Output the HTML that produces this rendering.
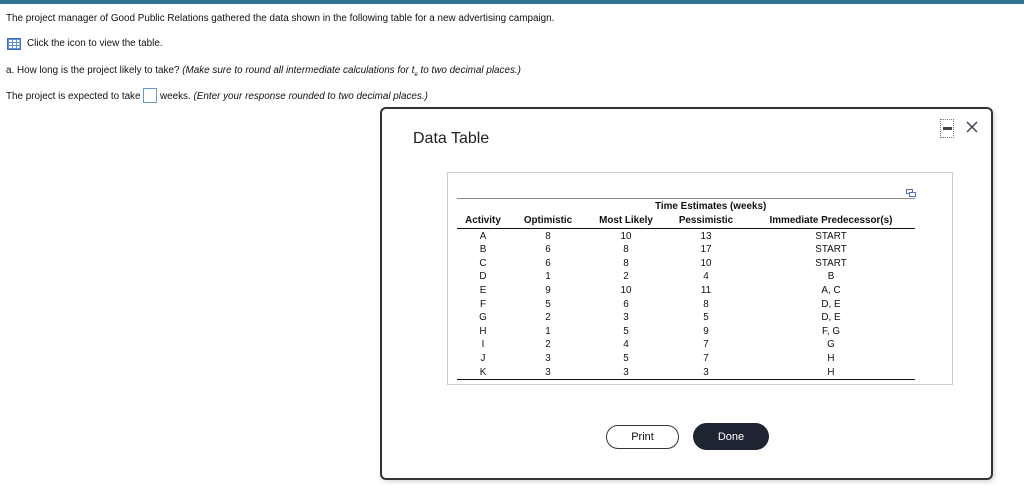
<!DOCTYPE html>
<html><head><style>
body{margin:0;width:1024px;height:495px;background:#fff;font-family:"Liberation Sans",Arial,sans-serif;position:relative;overflow:hidden;color:#111}
.a{position:absolute;white-space:nowrap}
.t{font-size:9.9px}
td,th{padding:0;height:13.6px;text-align:center;font-size:9.9px;line-height:13.6px}
th{font-weight:bold}
</style></head><body>
<div class="a" style="left:0;top:0;width:1024px;height:4px;background:#2f7394"></div>
<div class="a t" style="left:6px;top:13px">The project manager of Good Public Relations gathered the data shown in the following table for a new advertising campaign.</div>
<svg class="a" style="left:7px;top:38px" width="14" height="12"><rect x="0.5" y="0.5" width="13" height="11" fill="#5b8fd8" stroke="#3a6fc0"/><g fill="#fff"><rect x="2" y="2" width="3" height="2"/><rect x="6" y="2" width="3" height="2"/><rect x="10" y="2" width="2.5" height="2"/><rect x="2" y="5" width="3" height="2"/><rect x="6" y="5" width="3" height="2"/><rect x="10" y="5" width="2.5" height="2"/><rect x="2" y="8" width="3" height="2"/><rect x="6" y="8" width="3" height="2"/><rect x="10" y="8" width="2.5" height="2"/></g></svg>
<div class="a t" style="left:27px;top:38px">Click the icon to view the table.</div>
<div class="a t" style="left:6px;top:65px">a. How long is the project likely to take? <i>(Make sure to round all intermediate calculations for t<sub style="font-size:6px">e</sub> to two decimal places.)</i></div>
<div class="a t" style="left:6px;top:91px">The project is expected to take</div>
<div class="a" style="left:143px;top:88px;width:14px;height:15px;border:1px solid #6a9ac8;box-sizing:border-box"></div>
<div class="a t" style="left:160px;top:91px">weeks. <i>(Enter your response rounded to two decimal places.)</i></div>

<div class="a" style="left:380px;top:107px;width:613px;height:373px;border:2px solid #333;border-radius:6px;box-sizing:border-box;box-shadow:2px 2px 4px rgba(0,0,0,.15)"></div>
<div class="a" style="left:413px;top:130px;font-size:16px;color:#222">Data Table</div>
<div class="a" style="left:940px;top:119px;width:14px;height:19px;border:1px dotted #777;box-sizing:border-box"></div>
<div class="a" style="left:943px;top:127px;width:9px;height:3px;background:#444"></div>
<svg class="a" style="left:966px;top:121px" width="12" height="12"><path d="M1 1L11 11M11 1L1 11" stroke="#445" stroke-width="1.5"/></svg>

<div class="a" style="left:447px;top:172px;width:506px;height:213px;border:1px solid #ccc;box-sizing:border-box"></div>
<svg class="a" style="left:906px;top:189px" width="10" height="8"><rect x="0.5" y="0.5" width="6" height="4" fill="none" stroke="#5a6cc0"/><rect x="3.5" y="3.5" width="6" height="4" fill="#fff" stroke="#5a6cc0"/></svg>
<div class="a" style="left:457px;top:198px;width:458px;height:1px;background:#888"></div>
<div class="a" style="left:457px;top:228px;width:458px;height:1px;background:#111"></div>
<div class="a" style="left:457px;top:379px;width:458px;height:1px;background:#111"></div>
<div class="a" style="left:655px;top:201px;font-size:9.9px;font-weight:bold">Time Estimates (weeks)</div>
<table class="a" style="left:457px;top:214px;border-collapse:collapse;width:458px">
<colgroup><col style="width:52px"><col style="width:78px"><col style="width:78px"><col style="width:82px"><col style="width:168px"></colgroup>
<tr><th>Activity</th><th>Optimistic</th><th>Most Likely</th><th>Pessimistic</th><th>Immediate Predecessor(s)</th></tr>
<tr><td style="padding-top:2px">A</td><td style="padding-top:2px">8</td><td style="padding-top:2px">10</td><td style="padding-top:2px">13</td><td style="padding-top:2px">START</td></tr>
<tr><td>B</td><td>6</td><td>8</td><td>17</td><td>START</td></tr>
<tr><td>C</td><td>6</td><td>8</td><td>10</td><td>START</td></tr>
<tr><td>D</td><td>1</td><td>2</td><td>4</td><td>B</td></tr>
<tr><td>E</td><td>9</td><td>10</td><td>11</td><td>A, C</td></tr>
<tr><td>F</td><td>5</td><td>6</td><td>8</td><td>D, E</td></tr>
<tr><td>G</td><td>2</td><td>3</td><td>5</td><td>D, E</td></tr>
<tr><td>H</td><td>1</td><td>5</td><td>9</td><td>F, G</td></tr>
<tr><td>I</td><td>2</td><td>4</td><td>7</td><td>G</td></tr>
<tr><td>J</td><td>3</td><td>5</td><td>7</td><td>H</td></tr>
<tr><td>K</td><td>3</td><td>3</td><td>3</td><td>H</td></tr>
</table>

<div class="a" style="left:606px;top:425px;width:73px;height:24px;border:1px solid #333;border-radius:13px;box-sizing:border-box;text-align:center;line-height:22px;font-size:11px">Print</div>
<div class="a" style="left:693px;top:423px;width:76px;height:27px;background:#1f2433;border-radius:14px;text-align:center;line-height:28px;font-size:11px;color:#fff">Done</div>
</body></html>
